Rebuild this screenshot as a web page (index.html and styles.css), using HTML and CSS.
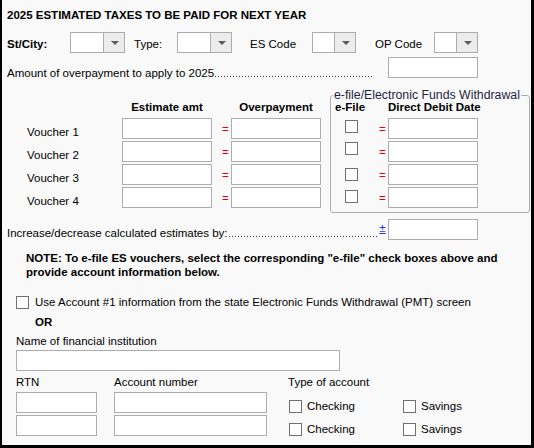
FILE: index.html
```html
<!DOCTYPE html>
<html lang="en">
<head>
<meta charset="utf-8">
<title>2025 Estimated Taxes</title>
<link rel="stylesheet" href="styles.css">
</head>
<body>
<main class="page">
  <h1 class="title">2025 ESTIMATED TAXES TO BE PAID FOR NEXT YEAR</h1>

  <div class="codes">
    <span class="code-label code-label--st">St/City:</span>
    <span class="select select--wide"><span class="select-value"></span><span class="select-btn"><span class="arrow"></span></span></span>
    <span class="code-label code-label--type">Type:</span>
    <span class="select select--wide"><span class="select-value"></span><span class="select-btn"><span class="arrow"></span></span></span>
    <span class="code-label code-label--es">ES Code</span>
    <span class="select select--narrow"><span class="select-value"></span><span class="select-btn"><span class="arrow"></span></span></span>
    <span class="code-label code-label--op">OP Code</span>
    <span class="select select--narrow"><span class="select-value"></span><span class="select-btn"><span class="arrow"></span></span></span>
  </div>

  <div class="line-row amount-row">
    <div class="leader leader--amount"><span class="leader-text">Amount of overpayment to apply to 2025</span><span class="dots"></span></div>
    <input type="text" class="field field--amt">
  </div>

  <div class="vouchers">
    <div class="voucher-grid">
      <span></span><span class="col-head col-head--center">Estimate amt</span><span></span><span class="col-head col-head--center">Overpayment</span>
      <span class="voucher-label">Voucher 1</span><input type="text" class="field"><span class="eq eq--left">=</span><input type="text" class="field">
      <span class="voucher-label">Voucher 2</span><input type="text" class="field"><span class="eq eq--left">=</span><input type="text" class="field">
      <span class="voucher-label">Voucher 3</span><input type="text" class="field"><span class="eq eq--left">=</span><input type="text" class="field">
      <span class="voucher-label">Voucher 4</span><input type="text" class="field"><span class="eq eq--left">=</span><input type="text" class="field">
    </div>
    <fieldset class="efile">
      <legend>e-file/Electronic Funds Withdrawal</legend>
      <div class="efile-grid">
        <span class="col-head">e-File</span><span></span><span class="col-head">Direct Debit Date</span>
        <input type="checkbox" class="check check--r1"><span class="eq">=</span><input type="text" class="field">
        <input type="checkbox" class="check check--r2"><span class="eq">=</span><input type="text" class="field">
        <input type="checkbox" class="check check--r3"><span class="eq">=</span><input type="text" class="field">
        <input type="checkbox" class="check check--r4"><span class="eq">=</span><input type="text" class="field">
      </div>
    </fieldset>
  </div>

  <div class="line-row increase-row">
    <div class="leader leader--increase"><span class="leader-text">Increase/decrease calculated estimates by:</span><span class="dots"></span></div>
    <span class="plusminus">±</span>
    <input type="text" class="field field--amt">
  </div>

  <p class="note">NOTE: To e-file ES vouchers, select the corresponding "e-file" check boxes above and<br>provide account information below.</p>

  <label class="use-account"><input type="checkbox" class="check"><span>Use Account #1 information from the state Electronic Funds Withdrawal (PMT) screen</span></label>

  <div class="or">OR</div>

  <section class="bank">
    <div class="bank-name-label">Name of financial institution</div>
    <input type="text" class="field field--name">

    <div class="bank-grid">
      <div class="bank-col bank-col--rtn">
        <span class="bank-label">RTN</span>
        <input type="text" class="field">
        <input type="text" class="field">
      </div>
      <div class="bank-col bank-col--acct">
        <span class="bank-label">Account number</span>
        <input type="text" class="field">
        <input type="text" class="field">
      </div>
      <div class="bank-col bank-col--type">
        <span class="bank-label">Type of account</span>
        <div class="acct-types">
          <label class="opt"><input type="checkbox" class="check"><span>Checking</span></label>
          <label class="opt"><input type="checkbox" class="check"><span>Savings</span></label>
          <label class="opt"><input type="checkbox" class="check"><span>Checking</span></label>
          <label class="opt"><input type="checkbox" class="check"><span>Savings</span></label>
        </div>
      </div>
    </div>
  </section>
</main>
</body>
</html>
```

FILE: styles.css
```css
* { box-sizing: border-box; }

html, body {
  margin: 0;
  padding: 0;
  background: #f9f9f9;
}

.page {
  display: block;
  width: 534px;
  height: 448px;
  border-left: 2px solid #000;
  border-right: 3px solid #000;
  border-bottom: 3px solid #000;
  background: #f9f9f9;
  padding-left: 5px;
  font-family: "Liberation Sans", Arial, sans-serif;
  font-size: 11.5px;
  line-height: 14px;
  color: #000;
  overflow: hidden;
}

.title {
  margin: 0;
  padding-top: 8px;
  font-size: 11.5px;
  font-weight: bold;
  line-height: 14px;
}

/* code selectors row */
.codes {
  display: flex;
  align-items: flex-start;
  margin-top: 10px;
}

.code-label {
  padding-top: 5px;
  white-space: nowrap;
}

.code-label--st { width: 63px; font-weight: bold; }
.code-label--type { width: 43px; margin-left: 9px; }
.code-label--es { width: 62px; margin-left: 18px; }
.code-label--op { width: 59px; margin-left: 19px; }

.select {
  display: flex;
  height: 21px;
  border: 1px solid #acacac;
  background: #fff;
}

.select--wide { width: 55px; }
.select--narrow { width: 44px; }

.select-value { flex: 1; }

.select-btn {
  width: 21px;
  border-left: 1px solid #acacac;
  background: #ececec;
  display: flex;
  align-items: center;
  justify-content: center;
  padding-left: 1px;
}

.arrow {
  width: 0;
  height: 0;
  border-left: 4px solid transparent;
  border-right: 4px solid transparent;
  border-top: 4px solid #5c5c5c;
}

/* fields */
.field {
  display: block;
  margin: 0;
  padding: 0 3px;
  height: 21px;
  border: 1px solid #acacac;
  border-radius: 0;
  background: #fff;
  font: inherit;
  outline: none;
}

.field--amt { width: 90px; }

.check {
  -webkit-appearance: none;
  appearance: none;
  display: block;
  width: 13px;
  height: 13px;
  margin: 0;
  border: 1px solid #707070;
  border-radius: 0;
  background: #fff;
  flex: none;
}

/* leader rows */
.line-row {
  display: flex;
  align-items: flex-start;
}

.leader {
  display: flex;
  align-items: flex-end;
}

.leader-text { white-space: nowrap; }

.dots {
  flex: 1;
  height: 1px;
  margin: 0 0 3px 1px;
  background-image: linear-gradient(to right, #3a3a3a 1px, transparent 1px);
  background-size: 3px 1px;
  background-repeat: repeat-x;
}

.amount-row { margin-top: 4px; }

.leader--amount {
  width: 365px;
  padding-top: 9px;
  margin-right: 16px;
}

/* vouchers */
.vouchers {
  display: flex;
  align-items: flex-start;
  margin-top: 9px;
}

.voucher-grid {
  display: grid;
  grid-template-columns: 115px 90px 19px 90px;
  grid-template-rows: 16px repeat(4, 21px);
  row-gap: 2px;
  padding-top: 11px;
  margin-right: 9px;
}

.col-head {
  font-weight: bold;
  white-space: nowrap;
  line-height: 12px;
  padding-top: 1px;
}

.col-head--center { text-align: center; }

.voucher-label {
  padding: 7px 0 0 20px;
  white-space: nowrap;
}

.eq {
  color: #e8000b;
  align-self: center;
}

.eq--left { padding-left: 10px; }

.efile {
  margin: 0;
  padding: 0 0 4px 4px;
  width: 200px;
  min-width: 0;
  border: 1px solid #acacac;
  border-radius: 3px;
}

.efile legend {
  padding: 0 1px;
  margin-left: -2px;
  font-size: 12.3px;
  line-height: 12px;
  color: #1f1f3f;
}

.efile-grid {
  display: grid;
  grid-template-columns: 44px 9px 90px;
  grid-template-rows: 16px repeat(4, 21px);
  row-gap: 2px;
  margin-top: -1px;
}

.efile-grid .check {
  align-self: start;
  margin-left: 10px;
}

.check--r1 { margin-top: 2px; }
.check--r2 { margin-top: 1px; }
.check--r3 { margin-top: 4px; }
.check--r4 { margin-top: 3px; }

/* increase row */
.increase-row { margin-top: 6px; }

.leader--increase {
  width: 370px;
  padding-top: 7px;
}

.plusminus {
  width: 11px;
  text-align: center;
  padding-top: 2px;
  color: #1a3cd6;
  text-decoration: underline;
}

/* note + account choice */
.note {
  margin: 11px 0 0 19px;
  font-weight: bold;
}

.use-account {
  display: flex;
  align-items: center;
  gap: 6px;
  margin: 16px 0 0 9px;
}

.or {
  margin: 6px 0 0 28px;
  font-weight: bold;
}

/* bank info */
.bank { margin-left: 9px; }

.bank-name-label { margin-top: 5px; }

.field--name {
  width: 324px;
  margin-top: 2px;
}

.bank-grid {
  display: flex;
  align-items: flex-start;
  margin-top: 4px;
}

.bank-col {
  display: flex;
  flex-direction: column;
  gap: 2px;
}

.bank-label {
  margin-bottom: 1px;
  white-space: nowrap;
}

.bank-col--rtn { width: 81px; margin-right: 17px; }
.bank-col--acct { width: 153px; margin-right: 21px; }
.bank-col--type { gap: 0; }

.acct-types {
  display: grid;
  grid-template-columns: 114px auto;
  row-gap: 9px;
  margin-top: 9px;
  padding-left: 1px;
}

.opt {
  display: flex;
  align-items: center;
  gap: 5px;
}
```
